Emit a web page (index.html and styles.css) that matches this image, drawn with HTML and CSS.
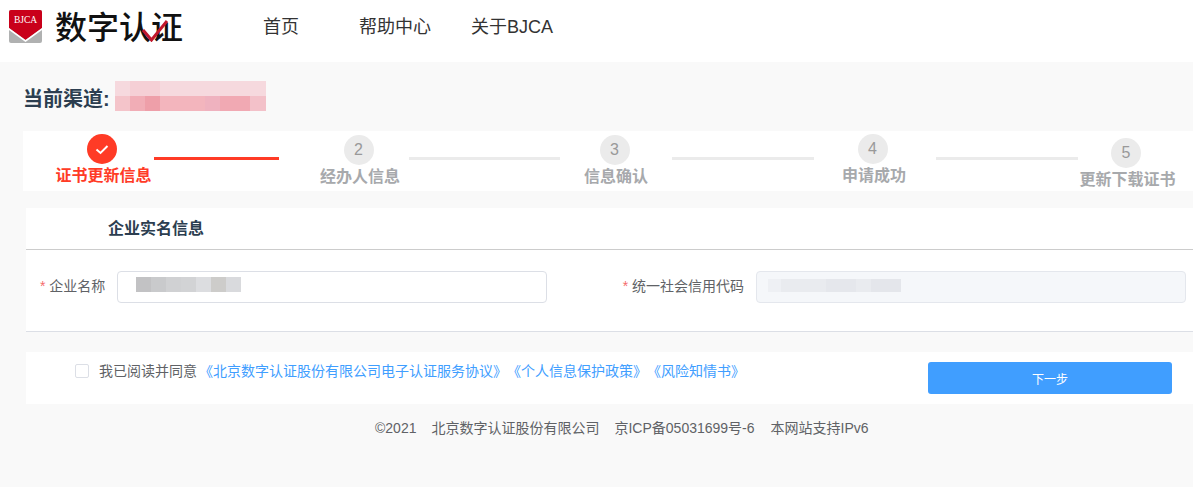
FILE: index.html
```html
<!DOCTYPE html>
<html lang="zh-CN">
<head>
<meta charset="utf-8">
<title>数字认证</title>
<link rel="stylesheet" href="styles.css">
</head>
<body>
<header class="header">
  <div class="logo">
    <svg class="logo-mark" width="33" height="33" viewBox="0 0 33 33">
      <rect x="0" y="0" width="33" height="33" rx="2" fill="#b0b1b1"/>
      <path d="M2 0H31a2 2 0 0 1 2 2V18L16.500 30 0 18V2A2 2 0 0 1 2 0Z" fill="#c9001a"/>
      <path d="M0 18L16.500 30 33 18V20L16.500 32 0 20Z" fill="#fff"/>
      <text x="16.500" y="13" text-anchor="middle" class="logo-mark-text">BJCA</text>
    </svg>
    <div class="logo-name">
      <span>数字认证</span>
      <svg class="logo-check" width="27" height="22" viewBox="0 0 27 22"><path d="M1 10L9.500 20 25 1" fill="none" stroke="#c2182c" stroke-width="3"/></svg>
    </div>
  </div>
  <nav class="nav">
    <a class="nav-a">首页</a>
    <a class="nav-b">帮助中心</a>
    <a class="nav-c">关于BJCA</a>
  </nav>
</header>

<main class="main">
  <h1 class="channel">
    <span class="channel-text">当前渠道:</span>
    <svg class="mosaic-pink" width="151" height="30" viewBox="0 0 151 30" shape-rendering="crispEdges">
      <rect width="151" height="15" fill="#f6d9de"/>
      <rect x="15" width="30" height="15" fill="#f5cfd5"/>
      <rect x="0" y="15" width="151" height="15" fill="#f3b5bd"/>
      <rect x="0" y="15" width="15" height="15" fill="#f4c4ca"/>
      <rect x="15" y="15" width="15" height="15" fill="#f1adb6"/>
      <rect x="30" y="15" width="15" height="15" fill="#ee9fa9"/>
      <rect x="90" y="15" width="15" height="15" fill="#efb2bf"/>
      <rect x="105" y="15" width="30" height="15" fill="#f1a9b3"/>
      <rect x="135" y="15" width="16" height="15" fill="#f3c1c9"/>
    </svg>
  </h1>

  <section class="steps">
    <div class="step step-1 is-active">
      <span class="dot"><svg width="14" height="11" viewBox="0 0 14 11"><path d="M1.500 5.500L5.500 9 12.500 2" fill="none" stroke="#fff" stroke-width="2"/></svg></span>
      <span class="step-label">证书更新信息</span>
    </div>
    <i class="bar bar-1"></i>
    <div class="step step-2"><span class="dot">2</span><span class="step-label">经办人信息</span></div>
    <i class="bar bar-2"></i>
    <div class="step step-3"><span class="dot">3</span><span class="step-label">信息确认</span></div>
    <i class="bar bar-3"></i>
    <div class="step step-4"><span class="dot">4</span><span class="step-label">申请成功</span></div>
    <i class="bar bar-4"></i>
    <div class="step step-5"><span class="dot">5</span><span class="step-label">更新下载证书</span></div>
  </section>

  <section class="card">
    <h2 class="card-title">企业实名信息</h2>
    <div class="form-row">
      <div class="field field-left">
        <label class="field-label"><em>*</em> 企业名称</label>
        <div class="input">
          <svg class="mosaic" width="105" height="15" viewBox="0 0 105 15" shape-rendering="crispEdges">
            <rect width="15" height="15" fill="#c2c2c4"/>
            <rect x="15" width="15" height="15" fill="#c9cacc"/>
            <rect x="30" width="15" height="15" fill="#d0d1d3"/>
            <rect x="45" width="15" height="15" fill="#d2d3d5"/>
            <rect x="60" width="15" height="15" fill="#dcdde0"/>
            <rect x="75" width="15" height="15" fill="#cdccca"/>
            <rect x="90" width="15" height="15" fill="#d9dadd"/>
          </svg>
        </div>
      </div>
      <div class="field field-right">
        <label class="field-label"><em>*</em> 统一社会信用代码</label>
        <div class="input input-disabled">
          <svg class="mosaic" width="133" height="13" viewBox="0 0 133 13" shape-rendering="crispEdges">
            <rect width="13" height="13" fill="#eef0f4"/>
            <rect x="13" width="45" height="13" fill="#e9ebef"/>
            <rect x="58" width="30" height="13" fill="#e5e7ec"/>
            <rect x="88" width="15" height="13" fill="#e9ebef"/>
            <rect x="103" width="30" height="13" fill="#e4e6eb"/>
          </svg>
        </div>
      </div>
    </div>
  </section>

  <section class="agree">
    <div class="agree-text">
      <span class="checkbox"></span>
      <span class="agree-plain">我已阅读并同意</span>
      <a class="agree-link">《北京数字认证股份有限公司电子认证服务协议》《个人信息保护政策》《风险知情书》</a>
    </div>
    <button class="next" type="button">下一步</button>
  </section>

  <footer class="footer">
    <span>©2021</span><span>北京数字认证股份有限公司</span><span>京ICP备05031699号-6</span><span class="footer-last">本网站支持IPv6</span>
  </footer>
</main>
</body>
</html>
```

FILE: styles.css
```css
* { box-sizing: border-box; }
html, body { margin: 0; padding: 0; }
body {
  width: 1193px;
  height: 487px;
  overflow: hidden;
  background: #f9f9f9;
  font-family: "Liberation Sans", "Noto Sans CJK SC", sans-serif;
  color: #606266;
}

.header {
  height: 62px;
  padding-bottom: 9px;
  background: #fff;
  display: flex;
  align-items: center;
}
.logo {
  display: flex;
  align-items: center;
  padding-left: 9px;
  width: 263px;
}
.logo-mark { flex: none; display: block; }
.logo-mark-text {
  font: 9.500px "Liberation Serif", serif;
  fill: #fff;
}
.logo-name {
  position: relative;
  margin: -4px 0 0 13px;
  width: 128px;
  font-size: 32px;
  line-height: 32px;
  font-weight: 500;
  color: #111;
  white-space: nowrap;
  font-family: "Noto Sans CJK SC", sans-serif;
}
.logo-check { position: absolute; left: 87px; top: 11px; }

.nav {
  display: flex;
  font-size: 18px;
  line-height: 24px;
  color: #333;
}
.nav-a { width: 96px; }
.nav-b { width: 112px; }

.main { display: flex; flex-direction: column; align-items: stretch; }

.channel {
  margin: 19px 0 20px 23px;
  height: 30px;
  display: flex;
  align-items: center;
  font-size: 20px;
  font-weight: 700;
  color: #2c3e50;
}
.channel-text { margin-top: 3px; }
.mosaic-pink { margin-left: 5px; display: block; }

.steps {
  margin-left: 23px;
  height: 60px;
  background: #fff;
  display: flex;
  align-items: flex-start;
}
.step {
  display: flex;
  flex-direction: column;
  align-items: center;
  flex: none;
  font-size: 16px;
  font-weight: 700;
  color: #a7a9ac;
}
.dot {
  width: 30px;
  height: 30px;
  margin-right: 3px;
  border-radius: 50%;
  background: #ebebeb;
  display: flex;
  align-items: center;
  justify-content: center;
  font-weight: 400;
  font-size: 16px;
  color: #999;
}
.step-label { line-height: 22px; margin-top: 1px; white-space: nowrap; }
.is-active { color: #ff3b26; }
.is-active .dot { background: #ff3b26; }

.step-1 { margin: 3px 0 0 32px; width: 97px; }
.step-2 { margin: 4px 0 0 41px; width: 80px; }
.step-3 { margin: 4px 0 0 24px; width: 64px; }
.step-4 { margin: 3px 0 0 28px; width: 64px; }
.step-5 { margin: 7px 0 0 1px; width: 97px; }

.bar { flex: none; height: 3px; margin-top: 26px; background: #ebebeb; display: block; }
.bar-1 { width: 125px; margin-left: 2px; background: #ff3b26; }
.bar-2 { width: 151px; margin-left: 9px; }
.bar-3 { width: 142px; margin-left: 24px; }
.bar-4 { width: 142px; margin-left: 30px; }

.card {
  margin: 17px 0 0 26px;
  height: 124px;
  background: #fff;
  border-bottom: 1px solid #dcdfe6;
}
.card-title {
  margin: 0;
  height: 42px;
  padding-left: 82px;
  border-bottom: 1px solid #ccc;
  font-size: 16px;
  line-height: 41px;
  font-weight: 700;
  color: #2c3e50;
}
.form-row { display: flex; padding-top: 21px; }
.field { display: flex; align-items: flex-start; flex: none; }
.field-left { width: 596px; padding-left: 14px; }
.field-right { width: 565px; }
.field-label {
  font-size: 14px;
  line-height: 30px;
  color: #606266;
  white-space: nowrap;
}
.field-label em { font-style: normal; color: #f56c6c; }
.field-left .field-label { width: 77px; }
.field-right .field-label { width: 122px; margin-right: 12px; text-align: right; }
.input {
  width: 430px;
  height: 32px;
  background: #fff;
  border: 1px solid #dcdfe6;
  border-radius: 4px;
  display: flex;
  align-items: flex-start;
}
.input-disabled { background: #f5f7fa; border-color: #e4e7ed; }
.mosaic { display: block; margin: 5px 0 0 18px; }
.input-disabled .mosaic { margin: 7px 0 0 11px; }

.agree {
  margin: 20px 0 0 26px;
  height: 52px;
  background: #fff;
  display: flex;
  align-items: flex-start;
}
.agree-text {
  width: 902px;
  padding: 9px 0 0 49px;
  display: flex;
  align-items: center;
  font-size: 14px;
  line-height: 20px;
  white-space: nowrap;
}
.checkbox {
  width: 14px;
  height: 14px;
  background: #fff;
  border: 1px solid #dcdfe6;
  border-radius: 2px;
  margin-right: 10px;
  flex: none;
}
.agree-plain { color: #606266; }
.agree-link { margin-left: 2px; color: #409eff; text-spacing-trim: space-all; }
.next {
  margin-top: 10px;
  width: 244px;
  height: 32px;
  border: 0;
  border-radius: 3px;
  background: #409eff;
  color: #fff;
  font-size: 12px;
  font-family: inherit;
  padding: 0;
}

.footer {
  margin: 14px 0 0 375px;
  display: flex;
  gap: 15px;
  font-size: 14px;
  line-height: 20px;
  color: #606266;
  white-space: nowrap;
}
.footer-last { margin-left: 1px; }
```
